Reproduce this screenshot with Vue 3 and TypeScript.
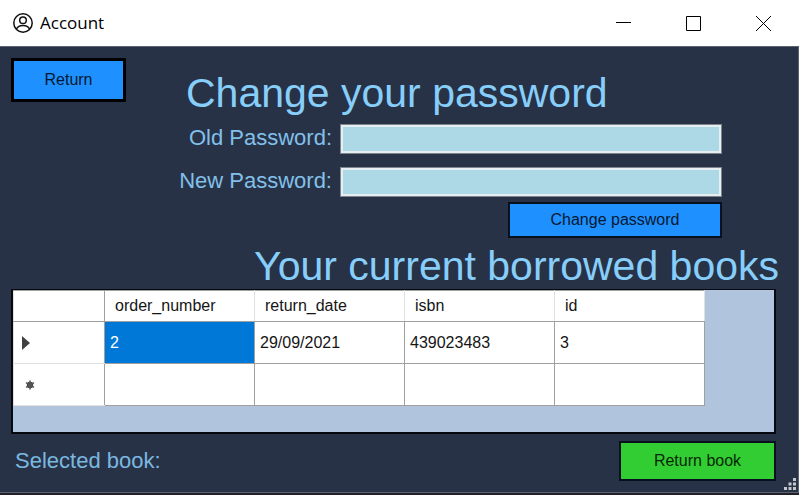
<script setup lang="ts">
import { ref } from 'vue'

interface Loan {
  order_number: string
  return_date: string
  isbn: string
  id: string
}

const columns: (keyof Loan)[] = ['order_number', 'return_date', 'isbn', 'id']
const loans: Loan[] = [
  { order_number: '2', return_date: '29/09/2021', isbn: '439023483', id: '3' },
]
const oldPassword = ref('')
const newPassword = ref('')
const selected = ref<keyof Loan>('order_number')
</script>

<template>
  <div class="window">
    <header class="titlebar">
      <svg class="app-icon" viewBox="0 0 20 20" width="20" height="20">
        <circle cx="10" cy="10" r="9.2" />
        <circle cx="10" cy="7.2" r="3.3" />
        <path d="M3.4 16.2 C4.8 13.4 7 12.6 10 12.6 S15.2 13.4 16.6 16.2" />
      </svg>
      <span class="title">Account</span>
      <div class="controls">
        <button type="button" aria-label="Minimize">
          <svg viewBox="0 0 15 15" width="15" height="15"><path d="M0 6.5H15" /></svg>
        </button>
        <button type="button" aria-label="Maximize">
          <svg viewBox="0 0 15 15" width="15" height="15"><path d="M.5.5H14.5V14.5H.5Z" /></svg>
        </button>
        <button type="button" aria-label="Close">
          <svg viewBox="0 0 15 15" width="15" height="15"><path d="M0 0L15 15M15 0L0 15" /></svg>
        </button>
      </div>
    </header>

    <main class="body">
      <section class="top">
        <button type="button" class="btn back">Return</button>
        <form class="password" @submit.prevent>
          <h1>Change your password</h1>
          <label for="old">Old Password:</label>
          <input id="old" v-model="oldPassword" type="password" />
          <label for="new">New Password:</label>
          <input id="new" v-model="newPassword" type="password" />
          <button type="submit" class="btn change">Change password</button>
        </form>
      </section>

      <h2>Your current borrowed books</h2>

      <section class="books">
        <div class="grid">
          <table>
            <thead>
              <tr>
                <th class="marker"></th>
                <th v-for="c in columns" :key="c">{{ c }}</th>
              </tr>
            </thead>
            <tbody>
              <tr v-for="loan in loans" :key="loan.id">
                <th class="marker">
                  <svg viewBox="0 0 8 14" width="8" height="14"><path d="M0 0L8 7L0 14Z" /></svg>
                </th>
                <td
                  v-for="c in columns"
                  :key="c"
                  :class="{ selected: c === selected }"
                  @click="selected = c"
                >{{ loan[c] }}</td>
              </tr>
              <tr>
                <th class="marker">
                  <svg class="star" viewBox="0 0 16 10" width="16" height="10">
                    <circle cx="8" cy="5" r="3.2" />
                    <path class="rays" d="M8 .5V9.500M4 2.700L12 7.300M12 2.700L4 7.300" />
                  </svg>
                </th>
                <td v-for="c in columns" :key="c"></td>
              </tr>
            </tbody>
          </table>
        </div>
        <footer class="actions">
          <span class="status">Selected book:</span>
          <button type="button" class="btn give-back">Return book</button>
        </footer>
      </section>

      <svg class="grip" viewBox="0 0 12 12" width="12" height="12">
        <path d="M9 0h3v3H9zM9 4.500h3v3H9zM9 9h3v3H9zM4.500 4.500h3v3h-3zM4.500 9h3v3h-3zM0 9h3v3H0z" />
      </svg>
    </main>
  </div>
</template>

<style>
body {
  margin: 0;
  background: #231f28;
}
</style>

<style scoped>
.window {
  font-family: "Liberation Sans", Arial, sans-serif;
  font-size: 16px;
  color: #000;
}
.titlebar {
  display: flex;
  align-items: center;
  height: 46px;
  padding: 0 1px 0 13px;
  background: #fff;
}
.app-icon {
  fill: none;
  stroke: #111;
  stroke-width: 1.5;
}
.title {
  flex: 1;
  padding-left: 7px;
  font: 17px/24px "Open Sans", "Noto Sans", sans-serif;
}
.controls {
  display: flex;
}
.controls button {
  display: grid;
  place-items: center;
  width: 70px;
  height: 46px;
  padding: 0;
  border: 0;
  background: none;
}
.controls svg {
  fill: none;
  stroke: #000;
  stroke-width: 1;
}
.body {
  position: relative;
  box-sizing: border-box;
  padding: 11px 0 11px 11px;
  background: #283246;
  border: solid #5b616d;
  border-width: 1px 1px 1px 0;
}
.top {
  display: flex;
  align-items: flex-start;
  gap: 49px;
  padding-right: 76px;
}
.btn {
  box-sizing: border-box;
  padding: 0;
  border: 2px solid #06101e;
  background: #1e90ff;
  color: #04182f;
  font: inherit;
}
.back {
  width: 115px;
  height: 44px;
  border: 3px solid #000;
}
.password {
  flex: 1;
  display: grid;
  grid-template-columns: 157px 1fr;
  column-gap: 8px;
}
h1,
h2 {
  margin: 0;
  font-size: 41px;
  font-weight: 400;
  line-height: 46px;
  color: #87cefa;
}
h1 {
  grid-column: 1 / -1;
  padding: 12px 0 8px 11px;
}
label {
  font-size: 22px;
  line-height: 28px;
  text-align: right;
  color: #82c0ea;
}
input {
  box-sizing: border-box;
  width: 100%;
  height: 30px;
  margin: 0 0 13px;
  padding: 0 6px;
  border: 1px solid #7f858c;
  border-radius: 0;
  outline: 0;
  background: #add8e6;
  box-shadow: inset 0 0 0 2px #e6eef2;
  font: inherit;
}
#new {
  margin-bottom: 5px;
}
.change {
  grid-column: 2;
  justify-self: end;
  width: 214px;
  height: 36px;
}
h2 {
  padding: 5px 19px 0 0;
  text-align: right;
}
.books {
  padding-right: 22px;
}
.grid {
  box-sizing: border-box;
  height: 145px;
  border: 2px solid #06090f;
  border-top-width: 1px;
  background: #b0c4de;
}
table {
  border-collapse: collapse;
  table-layout: fixed;
  width: 692px;
  background: #fff;
}
th,
td {
  box-sizing: border-box;
  width: 150px;
  height: 42px;
  padding: 0 5px;
  border: 1px solid #a0a0a0;
  text-align: left;
  font-weight: 400;
  color: #151515;
}
thead th {
  height: 31px;
  padding: 0 10px;
  border-color: #a0a0a0 #e0e0e0;
}
.marker {
  width: 91px;
  padding: 0 8px;
  border-color: #e0e0e0 #a0a0a0 #e0e0e0 #e0e0e0;
}
thead .marker {
  border-color: #a0a0a0 #a0a0a0 #a0a0a0 #e0e0e0;
}
.marker svg {
  display: block;
  fill: #404040;
}
.star .rays {
  fill: none;
  stroke: #555;
  stroke-width: 1.5;
}
td.selected {
  background: #0078d7;
  color: #fff;
}
.actions {
  display: flex;
  align-items: center;
  justify-content: space-between;
  padding: 7px 0 0 4px;
}
.status {
  font-size: 22px;
  line-height: 28px;
  color: #7ab8e0;
}
.give-back {
  width: 157px;
  height: 40px;
  background: #32cd32;
  color: #062806;
}
.grip {
  position: absolute;
  right: 2px;
  bottom: 2px;
  fill: #c3c6cc;
}
</style>
